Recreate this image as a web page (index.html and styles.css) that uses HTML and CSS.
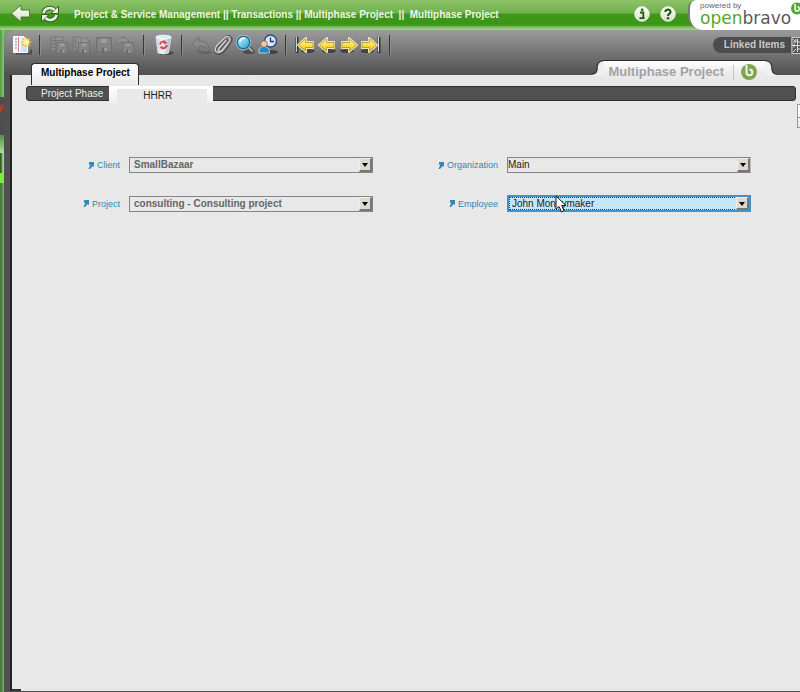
FILE: index.html
```html
<!DOCTYPE html>
<html lang="en">
<head>
<meta charset="utf-8">
<title>Multiphase Project</title>
<link rel="stylesheet" href="styles.css">
</head>
<body>
<svg class="defs" aria-hidden="true">
  <defs>
    <linearGradient id="gold" x1="0" y1="0" x2="0" y2="1"><stop offset="0" stop-color="#fff6a0"/><stop offset=".5" stop-color="#ffe04a"/><stop offset="1" stop-color="#eab81c"/></linearGradient>
    <linearGradient id="pale" x1="0" y1="0" x2="0" y2="1"><stop offset="0" stop-color="#ffffff"/><stop offset="1" stop-color="#cfe3c0"/></linearGradient>
    <linearGradient id="lens" x1="0" y1="0" x2="1" y2="1"><stop offset="0" stop-color="#d8f6ff"/><stop offset="1" stop-color="#1b9fd0"/></linearGradient>
    <linearGradient id="bin" x1="0" y1="0" x2="1" y2="0"><stop offset="0" stop-color="#b8cbd8"/><stop offset=".4" stop-color="#f4f9fc"/><stop offset="1" stop-color="#9fb6c6"/></linearGradient>
    <symbol id="jump" viewBox="0 0 6 7"><path d="M1 0h5v5L4.800 4 2 7H.500L2 3.500 1 2z" fill="#2f8ab8"/></symbol>
    <symbol id="floppy" viewBox="0 0 12 12"><path d="M.5.5h11v11h-11z" fill="#8c8c8c" stroke="#6a6a6a"/><path d="M3 1h6v4H3zM3 7.500h6V11H3z" fill="#a4a4a4" stroke="#707070" stroke-width=".6"/><path d="M4 8h2v3H4z" fill="#666"/></symbol>
    <symbol id="arrow" viewBox="0 0 18 18"><ellipse cx="11" cy="15" rx="7" ry="2" fill="#222" opacity=".6"/><path d="M1 9l8-7v4h7v6H9v4z" fill="url(#gold)" stroke="#f5e9ae" stroke-width="2" stroke-linejoin="round"/><path d="M1.500 9l7-6v3.500H16v5H8.500V15z" fill="url(#gold)" stroke="#8d7420" stroke-width=".6"/></symbol>
  </defs>
</svg>

<header class="topbar">
  <nav class="topnav" aria-label="Navigation">
    <button class="icon-btn back" aria-label="Back">
      <svg width="22" height="22" viewBox="0 0 22 22"><path d="M2.500 11.500L11 4v4.500h9v6h-9V19z" fill="#235c10" opacity=".6"/><path d="M1.500 10.500L11 2v5h8.500v7H11v5z" fill="url(#pale)" stroke="#55793f"/></svg>
    </button>
    <button class="icon-btn" aria-label="Refresh">
      <svg width="20" height="20" viewBox="0 0 20 20"><g fill="none" stroke="#2e5c20" stroke-width="4.600"><path d="M3.500 9c1-5 7.500-6.500 11-3"/><path d="M16.500 11c-1 5-7.500 6.500-11 3"/></g><path d="M18.500 2v7.500H11zM1.500 18v-7.500H9z" fill="#e8f3df" stroke="#2e5c20"/><g fill="none" stroke="#e8f3df" stroke-width="2.600"><path d="M3.500 9c1-5 7.500-6.500 11-3"/><path d="M16.500 11c-1 5-7.500 6.500-11 3"/></g></svg>
    </button>
    <p class="crumbs">Project &amp; Service Management || Transactions || Multiphase Project &nbsp;|| &nbsp;Multiphase Project</p>
    <button class="round" aria-label="Information">
      <svg width="16" height="16" viewBox="0 0 16 16"><circle cx="8" cy="8" r="7.200" fill="url(#pale)" stroke="#f4faef"/><path d="M6 6.500h3.300V12M5.500 12.200h5" fill="none" stroke="#1c5410" stroke-width="1.800"/><circle cx="8.200" cy="3.800" r="1.300" fill="#1c5410"/></svg>
    </button>
    <button class="round" aria-label="Help">
      <svg width="16" height="16" viewBox="0 0 16 16"><circle cx="8" cy="8" r="7.200" fill="url(#pale)" stroke="#f4faef"/><path d="M5.300 6C5.300 2.700 10.800 2.800 10.600 6 10.500 7.700 8 7.600 8 10" fill="none" stroke="#1c5410" stroke-width="2"/><circle cx="8" cy="12.300" r="1.200" fill="#1c5410"/></svg>
    </button>
  </nav>
  <a class="brand" href="#">
    <span class="powered">powered by</span>
    <span class="wordmark"><b>open</b>bravo</span>
    <svg class="brand-mark" width="12" height="13" viewBox="0 0 16 16" aria-hidden="true"><circle cx="8" cy="8" r="8" fill="#4fa82c"/><path d="M5.500 2v6.500a2.800 2.800 0 1 0 3-2.800" fill="none" stroke="#fff" stroke-width="2"/></svg>
  </a>
</header>

<div class="workspace">
  <aside class="rail">
    <div class="rail-top"></div>
    <div class="rail-flag"><svg width="4" height="38" viewBox="0 0 4 38" aria-hidden="true"><path d="M0 9l3-2v4l-3 6z" fill="#b5401f"/></svg></div>
    <div class="rail-light"></div>
    <div class="rail-dark"></div>
    <div class="rail-glow"></div>
    <div class="rail-rest"></div>
  </aside>

  <main class="window">
    <div class="chrome">
      <div class="toolbar" role="toolbar" aria-label="Record">
        <button class="tool" aria-label="New record">
          <svg width="22" height="22" viewBox="0 0 22 22"><path d="M5 19.500h15v-4" fill="none" stroke="#333" stroke-width="2" opacity=".6"/><path d="M2.500 2.500h10l4 4v12h-14z" fill="#eef5fc" stroke="#fff"/><path d="M4 5h2M4 8h2M4 11h2M4 14h2" stroke="#7d8da0"/><path d="M7.500 3v15" stroke="#e08080"/><path d="M10 9h6v9h-6z" fill="#cfe0f1"/><path d="M15 2l1.200 3 3-1.300L18 6.700 21 8l-3 1.300 1.200 3-3-1.300L15 14l-1.200-3-3 1.300L12 9.300 9 8l3-1.300-1.200-3 3 1.300z" fill="#f0c22e"/><circle cx="15" cy="8" r="3" fill="#fff3a0"/></svg>
        </button>
        <span class="sep"></span>
        <button class="tool" disabled aria-label="Save and grid">
          <svg width="22" height="22" viewBox="0 0 22 22"><path d="M2 3h12v14H2zM2 6.500h12M2 10h12M2 13.500h12M6 3v14" fill="#949494" stroke="#707070"/><use href="#floppy" x="7" y="8" width="12" height="12"/></svg>
        </button>
        <button class="tool" disabled aria-label="Save and new">
          <svg width="22" height="22" viewBox="0 0 22 22"><path d="M2 3h7l4 4v10H2zM5 3v14M2 7h3M2 10h3M2 13h3" fill="#949494" stroke="#707070"/><path d="M10 4l3 1 2-2 1 3 3 1-3 2-6 0z" fill="#9b9b9b" stroke="#777"/><use href="#floppy" x="7" y="8" width="12" height="12"/></svg>
        </button>
        <button class="tool" disabled aria-label="Save">
          <svg width="22" height="22" viewBox="0 0 22 22"><use href="#floppy" x="3" y="3" width="16" height="16"/></svg>
        </button>
        <button class="tool" disabled aria-label="Save and next">
          <svg width="22" height="22" viewBox="0 0 22 22"><path d="M2 9c0-4 3-5 6-5V2l6 5-6 4V8C5 8 4 9 4 11z" fill="#959595" stroke="#707070"/><use href="#floppy" x="7" y="8" width="12" height="12"/></svg>
        </button>
        <span class="sep"></span>
        <button class="tool" aria-label="Delete">
          <svg width="22" height="22" viewBox="0 0 22 22"><ellipse cx="13" cy="19" rx="8" ry="2" fill="#222" opacity=".5"/><path d="M3 3l2 16q6 2 10.500 0L18 3z" fill="url(#bin)" stroke="#e2edf3" stroke-width=".8"/><ellipse cx="10.500" cy="3" rx="7.500" ry="1.800" fill="#dcebf5" stroke="#fff" stroke-width=".8"/><path d="M7 10.500Q8 6.500 12 8M14 11q-1 4-5 3" fill="none" stroke="#d64a4a" stroke-width="2"/><path d="M11 6l3.500 3-4 1.500zM10 12l-3.500 1 3 3z" fill="#d64a4a"/></svg>
        </button>
        <span class="sep"></span>
        <button class="tool" disabled aria-label="Undo">
          <svg width="22" height="22" viewBox="0 0 22 22"><path d="M6 17q8 3 14 1" stroke="#444" stroke-width="2" opacity=".5" fill="none"/><path d="M1 9.500L8 3v4c7 0 10 3 10 10-2-4-5-5-10-5v4z" fill="#8c8c8c" stroke="#6a6a6a"/></svg>
        </button>
        <button class="tool" aria-label="Attachments">
          <svg width="22" height="22" viewBox="0 0 22 22"><g fill="none" stroke-linecap="round"><path d="M14 6.500l-7 8q-1.500 2.500.5 3t3-1l6.500-8q3-4 0-5.500t-5 1L4 12.500q-3 5 0 6.500t6-1l5-6" stroke="#555" stroke-width="2.600"/><path d="M13 6.500l-7 8q-1.500 2 .5 2.500t3-1l6.500-8q2.500-3.500 0-5t-4.500 1L3.500 12q-2.500 4.500 0 6t5.500-1l5-6" stroke="#d2d2d2" stroke-width="1.400"/></g></svg>
        </button>
        <button class="tool" aria-label="Search">
          <svg width="22" height="22" viewBox="0 0 22 22"><ellipse cx="14" cy="18" rx="6" ry="2" fill="#222" opacity=".5"/><path d="M12 12l6.500 6.500" stroke="#555" stroke-width="4"/><path d="M12.500 12.500l5 5" stroke="#c4c4c4" stroke-width="1.600"/><circle cx="8.500" cy="8.500" r="6.300" fill="url(#lens)" stroke="#176c96" stroke-width="1.600"/><circle cx="8.500" cy="8.500" r="7.300" fill="none" stroke="#b6e2f3" stroke-width=".6"/><path d="M5 8q.5-4 5-4" fill="none" stroke="#fff" stroke-width="1.500"/></svg>
        </button>
        <button class="tool" aria-label="Audit history">
          <svg width="22" height="22" viewBox="0 0 22 22"><ellipse cx="14" cy="18" rx="7" ry="2" fill="#222" opacity=".6"/><circle cx="13.500" cy="7" r="6" fill="#d8e6f7" stroke="#304d80" stroke-width="1.500"/><path d="M13.500 3.500V7.500H17" fill="none" stroke="#203b70" stroke-width="1.300"/><path d="M2 19q-1-6 5-6.500 6 .5 5.500 6.500z" fill="#2589c2" stroke="#c4e3f5" stroke-width=".8"/><circle cx="7" cy="10" r="3.300" fill="#f0c6a4" stroke="#664638" stroke-width=".6"/></svg>
        </button>
        <span class="sep"></span>
        <button class="tool" aria-label="First record">
          <svg width="22" height="22" viewBox="0 0 22 22"><path d="M2 3v16" stroke="#333" stroke-width="3"/><path d="M1.500 3v15" stroke="#ccc"/><use href="#arrow" x="2" y="2" width="18" height="18"/></svg>
        </button>
        <button class="tool" aria-label="Previous record">
          <svg width="22" height="22" viewBox="0 0 22 22"><use href="#arrow" x="1" y="2" width="18" height="18"/></svg>
        </button>
        <button class="tool" aria-label="Next record">
          <svg width="22" height="22" viewBox="0 0 22 22"><g transform="matrix(-1 0 0 1 20 0)"><use href="#arrow" x="1" y="2" width="18" height="18"/></g></svg>
        </button>
        <button class="tool" aria-label="Last record">
          <svg width="22" height="22" viewBox="0 0 22 22"><path d="M18 3v16" stroke="#333" stroke-width="3"/><path d="M17.500 3v15" stroke="#ddd"/><g transform="matrix(-1 0 0 1 18 0)"><use href="#arrow" x="1" y="2" width="18" height="18"/></g></svg>
        </button>
        <span class="sep"></span>
        <button class="linked">Linked Items</button>
        <button class="linked-grip" aria-label="Expand linked items">
          <svg width="9" height="17" viewBox="0 0 9 17"><path d="M9 .5H1v16h8" fill="#555" stroke="#c8c8c8"/><path d="M2 2l3 3M5 2v3H2M1 8.500h8M3 6.500v4M6.500 2v13M9 5H7M9 12H7M2 15l3-3" fill="none" stroke="#ddd"/></svg>
        </button>
      </div>
      <div class="tabs">
        <a class="tab" href="#">Multiphase Project</a>
        <div class="title-tab">
          <svg class="flare" width="12" height="16" viewBox="0 0 12 16" aria-hidden="true"><path d="M0 14.500Q5.500 14.500 5.500 9 5.500 1 12 1V16H0z" fill="#f0f0f0"/><path d="M0 14Q5 14 5 9 5 .5 12 .5" fill="none" stroke="#2c2c2c"/></svg>
          <h1>Multiphase Project</h1>
          <span class="title-mark"><svg width="16" height="16" viewBox="0 0 16 16" aria-hidden="true"><circle cx="8" cy="8" r="8" fill="#7fa64c"/><path d="M5.500 1v7.500a2.900 2.900 0 1 0 3-3" fill="none" stroke="#f4f4f4" stroke-width="2"/></svg></span>
          <svg class="flare flip" width="12" height="16" viewBox="0 0 12 16" aria-hidden="true"><path d="M0 14.500Q5.500 14.500 5.500 9 5.500 1 12 1V16H0z" fill="#f0f0f0"/><path d="M0 14Q5 14 5 9 5 .5 12 .5" fill="none" stroke="#2c2c2c"/></svg>
        </div>
      </div>
    </div>

    <section class="panel">
      <nav class="subtabs" aria-label="Child tabs">
        <a class="subtab" href="#">Project Phase</a>
        <a class="subtab current" href="#"><span>HHRR</span></a>
      </nav>
      <form class="form">
        <label for="client"><svg width="6" height="7" aria-hidden="true"><use href="#jump"/></svg>Client</label>
        <div class="field">
          <select id="client" class="locked"><option>SmallBazaar</option></select>
          <span class="drop"></span>
        </div>
        <label for="org"><svg width="6" height="7" aria-hidden="true"><use href="#jump"/></svg>Organization</label>
        <div class="field">
          <select id="org" class="plain"><option>Main</option></select>
          <span class="drop"></span>
        </div>
        <label for="project"><svg width="6" height="7" aria-hidden="true"><use href="#jump"/></svg>Project</label>
        <div class="field">
          <select id="project" class="locked"><option>consulting - Consulting project</option></select>
          <span class="drop"></span>
        </div>
        <label for="employee"><svg width="6" height="7" aria-hidden="true"><use href="#jump"/></svg>Employee</label>
        <div class="field active">
          <select id="employee"><option>John Moneymaker</option></select>
          <span class="drop"></span>
          <svg class="pointer" width="12" height="18" viewBox="0 0 12 18" aria-hidden="true"><path d="M1 1v13l3-2.500L6.500 17 9 15.800 6.700 10.500H11z" fill="#fff" stroke="#111"/></svg>
        </div>
      </form>
      <span class="edge"></span>
    </section>
  </main>
</div>
</body>
</html>
```
FILE: styles.css
```css
* { box-sizing: border-box; }

body {
  display: flex;
  flex-direction: column;
  min-height: 100vh;
  margin: 0;
  background: #4e4e4e;
  font: 10px/12px "Liberation Sans", Arial, sans-serif;
  overflow-x: hidden;
}

.defs { position: absolute; width: 0; height: 0; }

a { color: inherit; text-decoration: none; }

button {
  padding: 0;
  border: 0;
  background: none;
  font: inherit;
  color: inherit;
}

svg { display: block; flex: none; }

/* Top bar */
.topbar {
  display: flex;
  height: 30px;
  background: linear-gradient(#8cc467 0, #72b04e 13px, #41991a 14px, #3a9416 25px, #7cbb62 27px, #a9cf9a 30px);
}

.topnav {
  display: flex;
  flex: 1;
  align-items: center;
  gap: 10px;
  height: 28px;
  padding: 0 12px 0 10px;
}

.back { margin-right: -2px; }

.crumbs {
  flex: 1;
  margin: 0 0 0 4px;
  padding-top: 2px;
  color: #eef6e6;
  font-weight: bold;
  white-space: nowrap;
}

.brand {
  position: relative;
  width: 112px;
  padding: 2px 0 0 10px;
  border-left: 2px solid #747c70;
  border-radius: 8px 0 0 14px;
  background: #fff;
}

.powered {
  display: block;
  color: #666;
  font-size: 8px;
  line-height: 8px;
}

.wordmark {
  display: block;
  color: #5a5a5a;
  font: 17px/16px "DejaVu Sans", sans-serif;
}

.wordmark b { color: #4fa82c; font-weight: inherit; }

.brand-mark { position: absolute; top: 2px; right: -3px; }

/* Left rail */
.workspace { display: flex; flex: 1; background: #6fae5c; }

.rail {
  display: flex;
  flex-direction: column;
  width: 4px;
  background: #4e4e4e;
}

.rail-top { height: 67px; background: linear-gradient(90deg, #4d9c3c, #8fc383); }
.rail-flag { height: 38px; background: #4e4e4e; }
.rail-light { height: 18px; background: linear-gradient(#4c964a, #b2dca0); }
.rail-dark { height: 20px; background: linear-gradient(90deg, #35602a 1px, #a5d992 3px); }
.rail-glow { height: 10px; background: #78ee3c; }
.rail-rest { flex: 1; background: linear-gradient(90deg, #4a7d3c 2px, #7ea577 3px); }

/* Window chrome */
.window {
  display: flex;
  flex: 1;
  flex-direction: column;
  min-width: 0;
  border-radius: 10px 0 0 0;
  background: #505050;
}

.chrome {
  height: 45px;
  border-radius: 10px 0 0 0;
  background: linear-gradient(#9b9b9b, #505050);
}

.toolbar {
  display: flex;
  align-items: center;
  height: 30px;
  padding-left: 7px;
}

.tool { width: 22px; height: 22px; }
.tool:disabled { opacity: .75; }

.sep {
  width: 2px;
  height: 20px;
  margin: 0 8px 0 6px;
  border-left: 1px solid #383838;
  border-right: 1px solid #8e8e8e;
}

.linked {
  height: 16px;
  margin-left: auto;
  padding: 0 6px 0 11px;
  border-radius: 8px 0 0 8px;
  background: #4c4c4c;
  color: #c9c9c9;
  font-weight: bold;
}

.tabs {
  display: flex;
  position: relative;
  z-index: 1;
  align-items: flex-start;
  justify-content: space-between;
  padding: 0 23px 0 27px;
}

.tab {
  height: 22px;
  margin-top: 3px;
  padding: 3px 8px 0 9px;
  border: 1px solid #2e2e2e;
  border-bottom: 0;
  border-radius: 4px 4px 0 0;
  background: linear-gradient(#fff, #eaeaea);
  color: #000;
  font-weight: bold;
}

.title-tab { display: flex; height: 22px; }

.title-tab h1 {
  margin: 0;
  padding: 4px 9px 0 4px;
  border-top: 1px solid #2c2c2c;
  background: linear-gradient(#fff, #ececec 12px, #e8e8e8);
  color: #a3a3a3;
  font-size: 13px;
  line-height: 14px;
}

.title-mark {
  padding: 3px 8px 0;
  border-top: 1px solid #2c2c2c;
  background: linear-gradient(90deg, #c4c4c4 1px, transparent 1px) 0 4px / 100% 15px no-repeat, linear-gradient(#fff, #ececec 12px, #e8e8e8);
}

.flip { transform: scaleX(-1); }

/* Panel */
.panel {
  position: relative;
  flex: 1;
  margin: 0 0 1px 6px;
  padding: 11px 0 0;
  border-left: 2px solid #242424;
  background: linear-gradient(#333, #333) 0 100% / 9px 2px no-repeat #e8e8e8;
}

.subtabs {
  display: flex;
  height: 15px;
  margin: 0 4px 0 14px;
  border: 1px solid #2e2e2e;
  border-radius: 3px;
  background: #505050;
}

.subtab {
  padding: 1px 6px 0 14px;
  color: #ededed;
}

.subtab.current {
  width: 104px;
  height: 17px;
  margin-top: -1px;
  padding: 3px 6px 0 8px;
  background: linear-gradient(#fff, #f0f0f0);
  color: #222;
}

.subtab.current span {
  display: block;
  padding-left: 26px;
  background: #e9e9e9;
  line-height: 14px;
}

.form {
  display: grid;
  grid-template-columns: 108px 1fr 116px 1fr;
  column-gap: 9px;
  row-gap: 22px;
  align-items: center;
  padding: 56px 49px 0 0;
}

.form label {
  display: flex;
  align-items: center;
  justify-content: flex-end;
  gap: 3px;
  color: #2f86b5;
  font-size: 9px;
}

.field { position: relative; display: flex; }

.field select {
  appearance: none;
  width: 100%;
  height: 16px;
  margin: 0;
  padding: 0 20px 0 4px;
  border: 1px solid #858585;
  border-radius: 0;
  outline: 0;
  background: #e8e8e8;
  color: #222;
  font: inherit;
}

.field .locked { color: #666; font-weight: bold; }
.field .plain { padding-left: 0; border-right-color: #bbb; }

.field.active select {
  height: 17px;
  padding-left: 3px;
  border: 2px solid #4590c4;
  background: #c4e7f8;
  outline: 1px dotted #333;
  outline-offset: -3px;
}

.drop {
  position: absolute;
  top: 1px;
  right: 1px;
  bottom: 1px;
  width: 13px;
  border: 1px solid #eee;
  border-right: 2px solid #777;
  border-bottom: 2px solid #777;
  background: #dedad2;
  pointer-events: none;
}

.drop::after {
  content: "";
  position: absolute;
  top: 4px;
  left: 2px;
  border: 3px solid transparent;
  border-top: 4px solid #000;
  border-bottom: 0;
}

.active .drop { top: 2px; right: 2px; bottom: 2px; }

.pointer { position: absolute; top: 0; left: 48px; }

.edge {
  position: absolute;
  top: 29px;
  right: 0;
  width: 3px;
  height: 24px;
  border: 1px solid #999;
  border-right: 0;
  background: linear-gradient(#fff 12px, #999 12px, #999 13px, #eee 13px);
}
```
